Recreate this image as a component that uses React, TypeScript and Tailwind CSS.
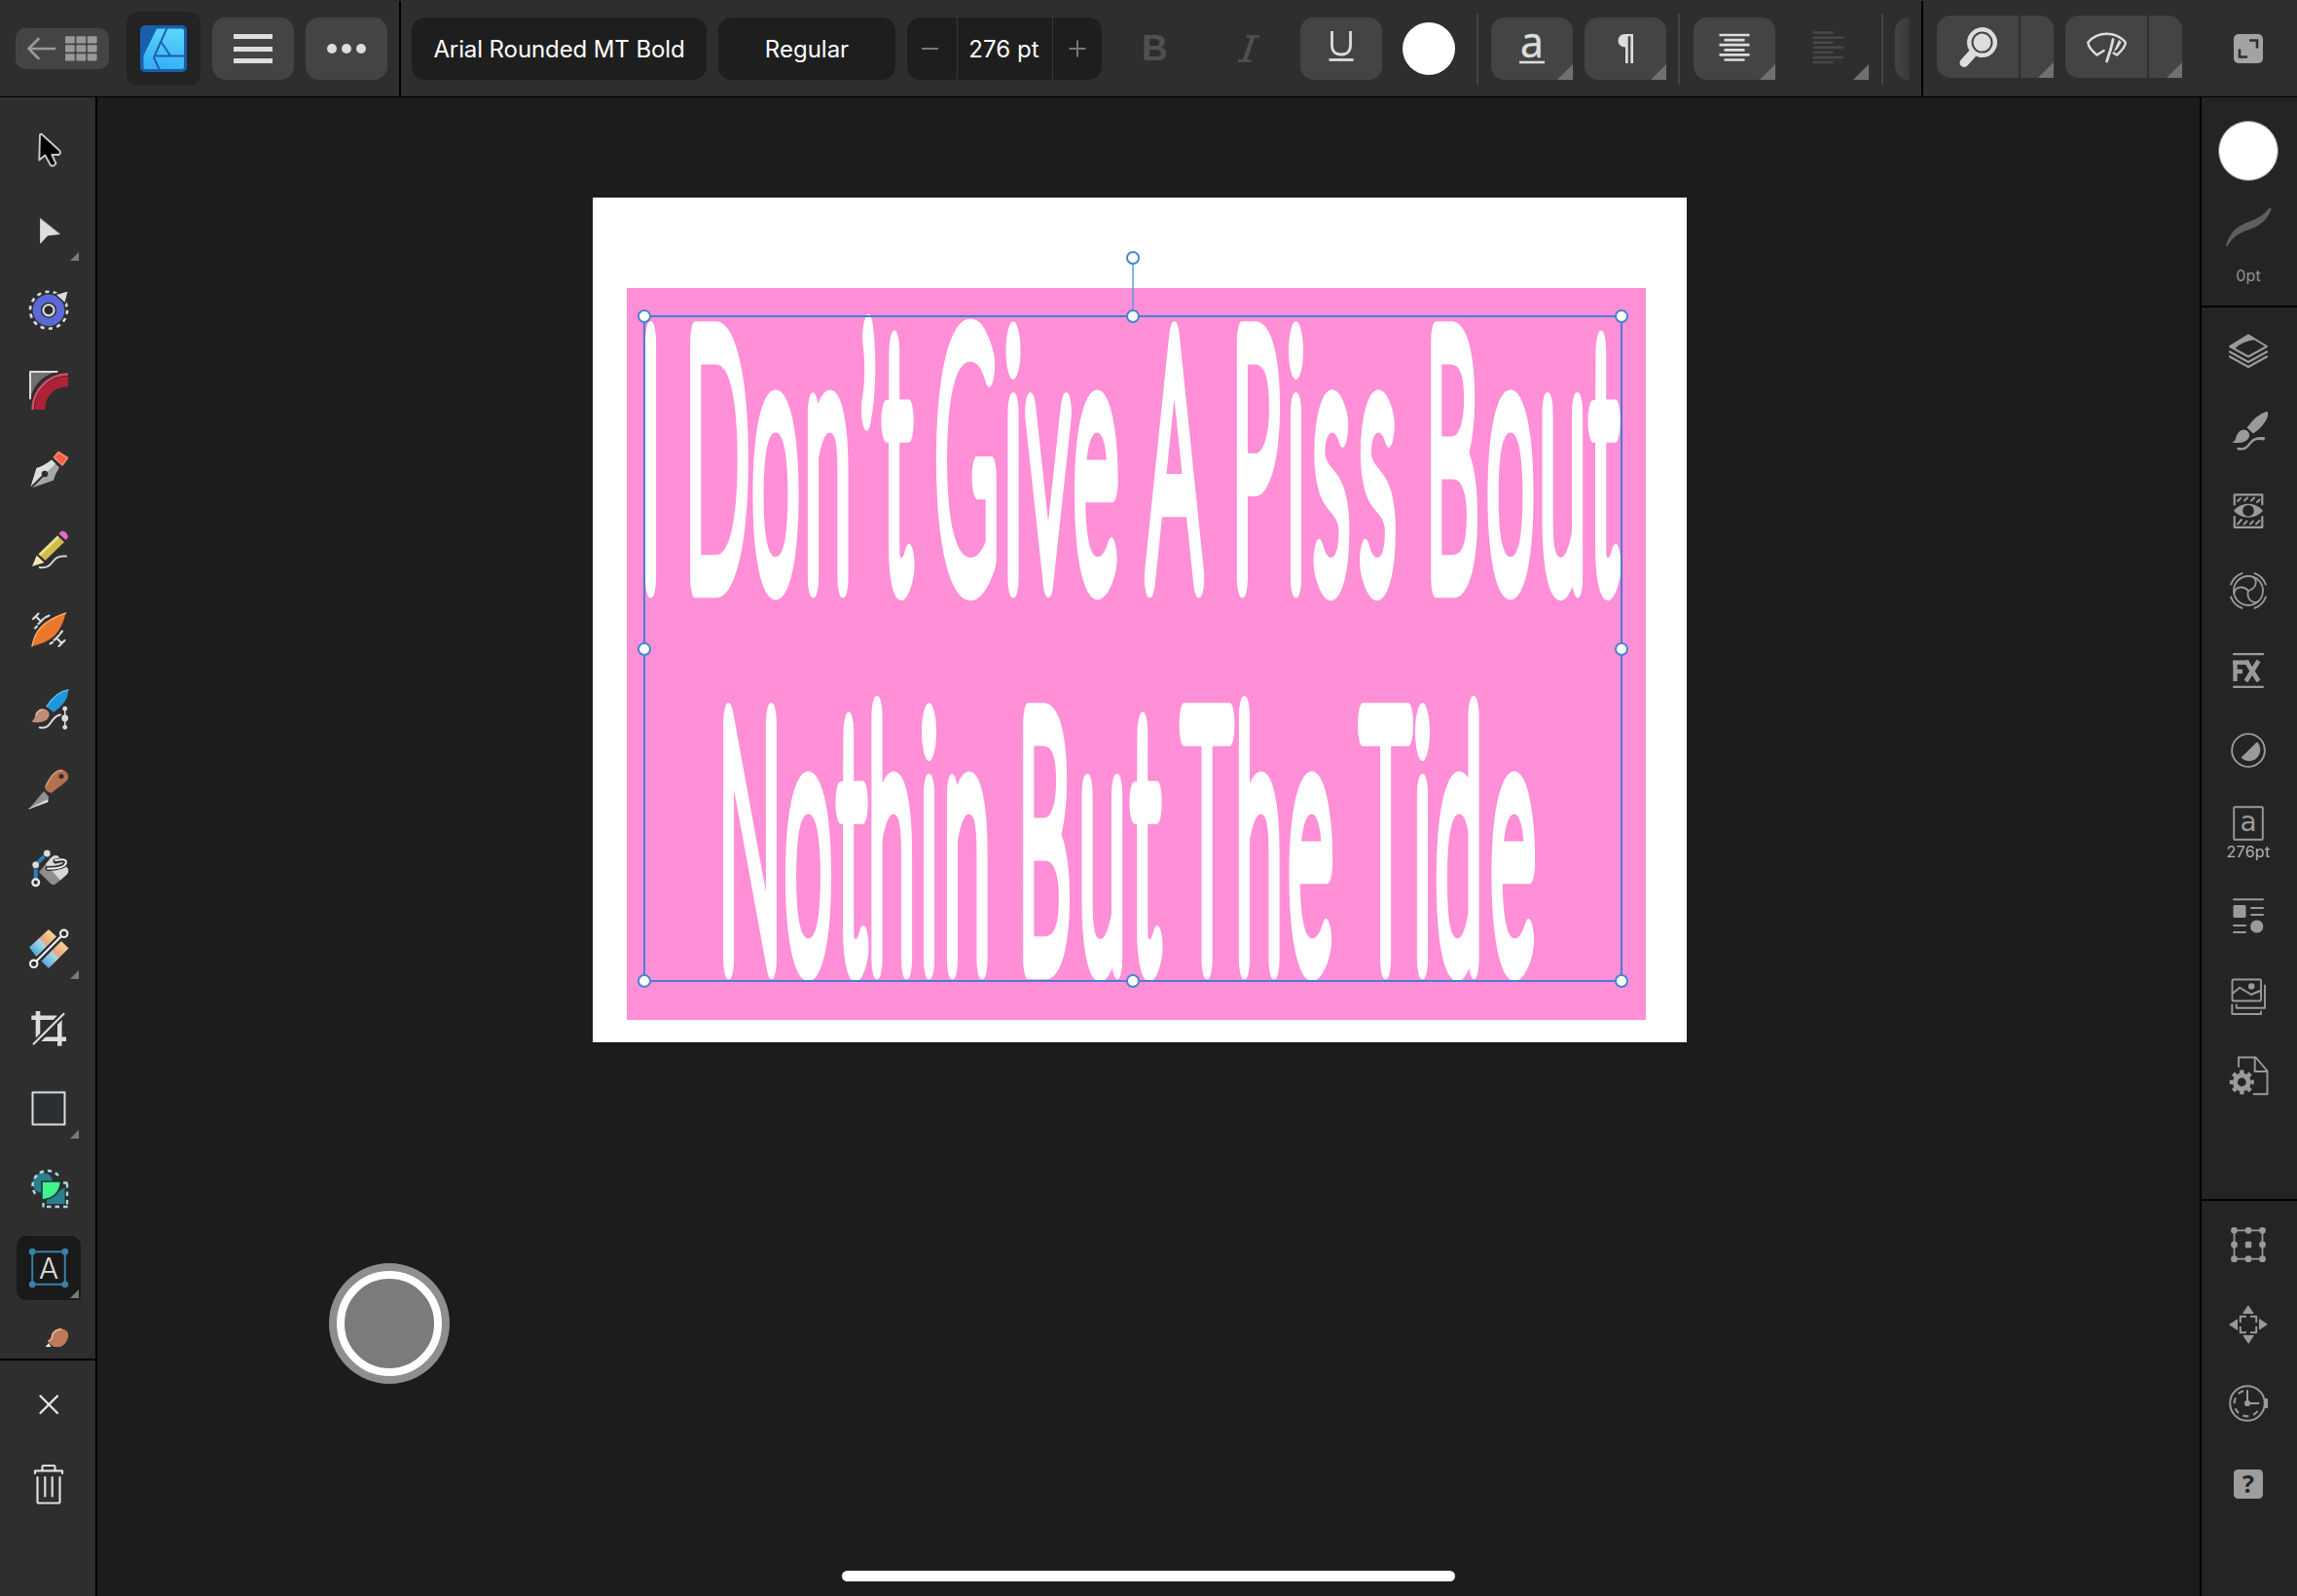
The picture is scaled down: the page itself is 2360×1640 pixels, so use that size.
import React from "react";

type Kids = { children?: React.ReactNode };

function Icon({ children, className = "" }: Kids & { className?: string }) {
  return (
    <svg viewBox="0 0 48 48" className={"h-12 w-12 shrink-0 overflow-visible " + className} fill="none" strokeLinecap="round" strokeLinejoin="round">
      {children}
    </svg>
  );
}

/* ---------- artwork text ---------- */

const SX = 0.92;
const SY = 3.7;

const LINE_ONE = {
  text: "I Don’t Give A Piss Bout",
  centers: [668.5, 690, 737, 797, 850.5, 892, 922, 950, 993, 1041, 1077, 1126, 1160, 1206.5, 1250, 1290, 1331.5, 1368, 1415.5, 1450, 1492, 1552, 1605.5, 1648],
};
const LINE_TWO = {
  text: "Nothin But The Tide",
  centers: [770.5, 830.5, 875, 916, 954.5, 993.5, 1030, 1073, 1132.5, 1177, 1200, 1240, 1293.5, 1346.5, 1380, 1423.5, 1461.5, 1499, 1554.5],
};

function StretchedLine({ line, baseline }: { line: { text: string; centers: number[] }; baseline: number }) {
  return (
    <>
      <text
        transform={`translate(-609 ${baseline - 203}) scale(${SX} ${SY})`}
        x={line.centers.map((c) => (c / SX).toFixed(2)).join(" ")}
        y={[...line.text].map((ch) => (ch === "’" ? 2.5 : 0)).join(" ")}
        textAnchor="middle"
        className="fill-white stroke-white font-['Lato'] text-[94px] font-thin"
        strokeWidth="11"
        strokeLinejoin="round"
        strokeLinecap="round"
      >
        {line.text}
      </text>
      {/* solid centres for the dots of the i */}
      {[...line.text].map((ch, i) =>
        ch === "i" ? <ellipse key={i} cx={line.centers[i] - 609} cy={baseline - 436} rx="5" ry="17" fill="#fff" /> : null
      )}
    </>
  );
}

const HANDLES = [
  [555, 62],
  [53, 122],
  [555, 122],
  [1057, 122],
  [53, 464],
  [1057, 464],
  [53, 805],
  [555, 805],
  [1057, 805],
];

function Artboard() {
  return (
    <div className="absolute left-[509px] top-[103px] h-[868px] w-[1124px] bg-white">
      <div className="absolute left-[35px] top-[93px] h-[752px] w-[1047px] bg-[#ff8fd6]" />
      <svg className="absolute inset-0 h-full w-full" viewBox="0 0 1124 868">
        <StretchedLine line={LINE_ONE} baseline={594} />
        <StretchedLine line={LINE_TWO} baseline={986} />
        <path d="M555 62V122" stroke="#5b9be6" strokeWidth="1.5" />
        <rect x="53" y="122" width="1004" height="683" fill="none" stroke="#4a7dd6" strokeWidth="2" />
        {HANDLES.map(([x, y]) => (
          <circle key={`${x}-${y}`} cx={x} cy={y} r="6" fill="#fff" stroke="#4585cc" strokeWidth="2" />
        ))}
      </svg>
    </div>
  );
}

/* ---------- top bar ---------- */

function Corner({ className = "" }: { className?: string }) {
  return (
    <svg viewBox="0 0 16 16" className={"absolute bottom-0 right-0 h-4 w-4 " + className}>
      <path d="M16 0V16H0Z" fill="#707070" />
    </svg>
  );
}

function Divider() {
  return <div className="h-[73px] w-[2px] shrink-0 bg-[#444]" />;
}

function TopBar() {
  return (
    <header className="flex h-[100px] shrink-0 items-center border-b border-black bg-[#2e2e2e] pt-px">
      <div className="flex h-[98px] w-[412px] shrink-0 items-center border-r-2 border-black pl-4">
        <div className="flex h-[42px] w-24 items-center rounded-[10px] bg-[#444]">
          <svg viewBox="0 0 96 42" className="h-[42px] w-24" fill="none">
            <path d="M40 21H14M23.500 11L13.500 21L23.500 31" stroke="#999" strokeWidth="2.600" strokeLinecap="round" strokeLinejoin="round" />
            {[0, 1, 2].map((r) =>
              [0, 1, 2].map((c) => <rect key={`${r}${c}`} x={51 + c * 11.400} y={8.200 + r * 9} width="9.800" height="7.300" rx="1" fill="#999" />)
            )}
          </svg>
        </div>
        <div className="ml-[18px] flex h-[76px] w-[76px] items-center justify-center rounded-[12px] bg-[#232323]">
          <svg viewBox="0 0 48 48" className="h-12 w-12">
            <defs>
              <linearGradient id="logoFill" x1="0.600" y1="0" x2="0.400" y2="1">
                <stop offset="0" stopColor="#5cd5fb" />
                <stop offset="1" stopColor="#34aef5" />
              </linearGradient>
            </defs>
            <rect width="48" height="48" rx="5" fill="#1a5fae" />
            <path d="M17 3.500H42.500Q45 3.500 45 6V42.500Q45 45 42.500 45H5.500Q3.500 45 3.500 42.500V31Z" fill="url(#logoFill)" />
            <path d="M27.500 3L14 33L19.500 45M21.500 17L31 31.300M14.500 31.500H45" stroke="#1a5fae" strokeWidth="1.900" fill="none" />
          </svg>
        </div>
        <div className="ml-3 flex h-16 w-[84px] flex-col items-center justify-center gap-[7.5px] rounded-[14px] bg-[#444]">
          <div className="h-[5px] w-10 bg-[#ddd]" />
          <div className="h-[5px] w-10 bg-[#ddd]" />
          <div className="h-[5px] w-10 bg-[#ddd]" />
        </div>
        <div className="ml-3 flex h-16 w-[84px] items-center justify-center gap-[5px] rounded-[14px] bg-[#444]">
          <div className="h-[10px] w-[10px] rounded-full bg-[#ddd]" />
          <div className="h-[10px] w-[10px] rounded-full bg-[#ddd]" />
          <div className="h-[10px] w-[10px] rounded-full bg-[#ddd]" />
        </div>
      </div>

      <div className="flex h-[98px] w-[1564px] shrink-0 items-center border-r-2 border-black pl-[11px] text-[24px] text-white">
        <div className="flex h-16 w-[303px] shrink-0 items-center justify-center rounded-[14px] bg-[#1e1e1e] pt-px">
          <span className="whitespace-nowrap tracking-[-0.1px]">Arial Rounded MT Bold</span>
        </div>
        <div className="ml-3 flex h-16 w-[182px] shrink-0 items-center justify-center rounded-[14px] bg-[#1e1e1e] pt-px">Regular</div>
        <div className="ml-3 flex h-16 w-[200px] shrink-0 items-center rounded-[14px] bg-[#1e1e1e]">
          <div className="flex h-16 w-[51px] items-center justify-center pr-px">
            <div className="-ml-1 h-[2px] w-[17px] bg-[#777]" />
          </div>
          <div className="flex h-16 w-[99px] items-center justify-center whitespace-nowrap border-x border-[#383838] pr-[2px] pt-px tracking-[0.1px]">276 pt</div>
          <div className="flex h-16 flex-1 items-center justify-center">
            <svg viewBox="0 0 18 18" className="h-[18px] w-[18px]">
              <path d="M9 0.500V17.500M0.500 9H17.500" stroke="#777" strokeWidth="2" />
            </svg>
          </div>
        </div>
        <span className="ml-[41px] w-[26px] text-center font-['Liberation_Sans'] text-[37px] font-bold leading-[40px] text-[#505050]">B</span>
        <svg viewBox="0 0 22 28" className="ml-[73px] h-7 w-[22px] shrink-0" fill="none" stroke="#505050">
          <path d="M8.500 1.500H22M0 26.500H13.500" strokeWidth="2.500" />
          <path d="M15.300 1.500L6.700 26.500" strokeWidth="4" />
        </svg>
        <div className="ml-[42px] flex h-16 w-[84px] shrink-0 items-center justify-center rounded-[14px] bg-[#444]">
          <svg viewBox="0 0 26 32" className="mb-[4px] h-8 w-[26px]" fill="none" stroke="#ddd">
            <path d="M3.500 0V14.500C3.500 20.500 7 24 13 24S22.500 20.500 22.500 14.500V0" strokeWidth="2.800" />
            <path d="M0.500 29.500H25.500" strokeWidth="2.800" />
          </svg>
        </div>
        <div className="ml-[21px] h-[54px] w-[54px] shrink-0 rounded-full bg-white" />
        <div className="ml-[22px] flex items-center">
          <Divider />
          <div className="relative ml-[13px] flex h-16 w-[84px] items-center justify-center rounded-[14px] rounded-br-none bg-[#444]">
            <svg viewBox="0 0 84 64" className="h-16 w-[84px] overflow-visible">
              <text x="42" y="41" textAnchor="middle" className="fill-[#ddd] stroke-[#ddd] font-['Open_Sans'] text-[43px]" strokeWidth="0.500">
                a
              </text>
              <path d="M29 46H55" stroke="#ddd" strokeWidth="2.600" />
            </svg>
            <Corner />
          </div>
          <div className="relative ml-3 flex h-16 w-[84px] items-center justify-center rounded-[14px] rounded-br-none bg-[#444]">
            <svg viewBox="0 0 17 30" className="h-[30px] w-[17px]">
              <path d="M7.500 0H16V30H13.300V2.300H10.700V30H8V13.500C3.500 13.500 0.500 10.600 0.500 6.800S3.500 0 7.500 0Z" fill="#ddd" />
            </svg>
            <Corner />
          </div>
          <div className="ml-3">
            <Divider />
          </div>
          <div className="relative ml-[14px] flex h-16 w-[84px] items-center justify-center rounded-[14px] rounded-br-none bg-[#444]">
            <svg viewBox="0 0 32 30" className="mb-[2px] h-[30px] w-8" stroke="#ddd" strokeWidth="2.700">
              <path d="M0.500 2H31.500M5.500 7.100H26.500M0.500 12.200H31.500M5.500 17.300H26.500M0.500 22.400H31.500M5.500 27.500H26.500" />
            </svg>
            <Corner />
          </div>
          <div className="relative ml-3 h-16 w-[84px]">
            <svg viewBox="0 0 84 64" className="h-16 w-[84px]" stroke="#494949" strokeWidth="2.400">
              <path d="M26.500 15.500H47.500M26.500 20.600H58M26.500 25.700H47.500M26.500 30.800H58M26.500 35.900H47.500M26.500 41H58M26.500 46H47.500" />
            </svg>
            <Corner />
          </div>
          <div className="ml-[13px]">
            <Divider />
          </div>
          <div className="ml-[12px] h-16 w-[15px] rounded-l-[14px] bg-gradient-to-r from-[#444] to-[#383838]" />
        </div>
      </div>

      <div className="flex h-[98px] flex-1 items-start pl-[14px] pt-[15px]">
        <div className="relative flex h-16 w-[120px] overflow-hidden rounded-[14px] rounded-br-none bg-[#444]">
          <div className="h-16 w-[86px] border-r-2 border-[#2e2e2e]">
            <svg viewBox="0 0 84 64" className="h-16 w-[84px]" fill="none">
              <path d="M37.500 38L28 48.500" stroke="#ddd" strokeWidth="9" strokeLinecap="round" />
              <path d="M34.500 36L40 41" stroke="#444" strokeWidth="1.500" />
              <circle cx="46.500" cy="27.600" r="15.500" fill="#ddd" />
              <circle cx="46.500" cy="27.600" r="10" stroke="#444" strokeWidth="2" />
            </svg>
          </div>
          <Corner />
        </div>
        <div className="relative ml-3 flex h-16 w-[120px] overflow-hidden rounded-[14px] rounded-br-none bg-[#444]">
          <div className="h-16 w-[86px] border-r-2 border-[#2e2e2e]">
            <svg viewBox="0 0 84 64" className="h-16 w-[84px]" fill="none" stroke="#ddd" strokeWidth="2.400" strokeLinejoin="round" strokeLinecap="round">
              <path d="M39.500 36L32.500 40.500C27 36 23.300 31.500 23.300 27.500C29 21 35 18.800 42.500 18.800S56 21 61.800 27.500C61.800 31.500 58 36 53 40.500L49.500 38.500" />
              <path d="M49 24.500L46.500 35L42.500 47" strokeWidth="2.800" />
              <path d="M55 26L50.500 36.500L53.500 33.500L57 27.500Z" fill="#ddd" strokeWidth="1" />
            </svg>
          </div>
          <Corner />
        </div>
        <svg viewBox="0 0 30 30" className="ml-[53px] mt-[19px] h-[30px] w-[30px]">
          <rect width="30" height="30" rx="5" fill="#a3a3a3" />
          <path d="M16 6.500H24V14.500M14 23.500H6V15.500" stroke="#2e2e2e" strokeWidth="2.600" fill="none" />
        </svg>
      </div>
    </header>
  );
}

/* ---------- left tools ---------- */

const O = "#2e2e2e";

const TOOLS: { name: string; more?: boolean; active?: boolean; art: React.ReactNode }[] = [
  {
    name: "move",
    art: <path d="M15 7.500L14.300 33.500L20.300 28.500L25.800 38.500Q29 41 31.500 37L27.300 28H34.500Q37 26 35 23.500L17.500 7.500Q16 6 15 7.500Z" fill="#000" stroke="#c9c9c9" strokeWidth="1.900" />,
  },
  { name: "node", more: true, art: <path d="M15.500 12V37L23 28.800L35 27.500Z" fill="#ddd" stroke="#ddd" strokeWidth="0.800" /> },
  {
    name: "contour",
    art: (
      <>
        <circle cx="24" cy="23.700" r="19" stroke="#ddd" strokeWidth="2.600" strokeDasharray="4.200 4.325" strokeLinecap="butt" />
        <circle cx="24" cy="23.700" r="16.300" fill="#5a69d6" />
        <circle cx="24" cy="23.700" r="8" fill="#1e2038" />
        <circle cx="24" cy="23.700" r="5.600" stroke="#ddd6c6" strokeWidth="2.300" fill="#2a2a34" />
        <path d="M44.500 3.500L30.500 7.500L41 17Z" fill="#ddd" stroke={O} strokeWidth="1.500" />
      </>
    ),
  },
  {
    name: "corner",
    art: (
      <>
        <path d="M5 32V5H32C18 9 9 18 5 32Z" fill="#707070" />
        <path d="M5 32.500V5H32.500" stroke="#ddd" strokeWidth="2" />
        <path d="M8 44C8 24 24 8 44 8" stroke={O} strokeWidth="7" strokeLinecap="butt" />
        <path d="M7.500 44C7.500 24 24 7.500 44 7.500" stroke="#d84a60" strokeWidth="2.600" strokeLinecap="butt" />
        <path d="M15 44C15 27 27 15 44 15" stroke="#ad2238" strokeWidth="10.500" strokeLinecap="butt" />
      </>
    ),
  },
  {
    name: "pen",
    art: (
      <>
        <path d="M5 43L11.500 22Q19 20 27 13.500L35 21.500Q31 27 29 34.500Z" fill="#a6a6a6" />
        <path d="M5 43L11.500 22Q19 20 27 13.500L31 17.500Z" fill="#dedede" />
        <path d="M5.500 42.500L20 28" stroke={O} strokeWidth="2" />
        <circle cx="20" cy="28" r="3.300" fill={O} />
        <path d="M34 5.500L43.500 11.500L38 19L29.500 11Z" fill="#f4604a" stroke="#ff8a6c" strokeWidth="1.500" />
      </>
    ),
  },
  {
    name: "pencil",
    art: (
      <>
        <path d="M13.500 28.500L33 9.500L40 16L20.500 35Z" fill="#d3bb4e" />
        <path d="M13.500 28.500L33 9.500L35 11.500L15.500 30.500Z" fill="#ecdf8a" />
        <path d="M7 41L11.800 29.500L19.500 37Z" fill="#f3e5ae" />
        <path d="M12.300 28.800L20.500 36.500" stroke={O} strokeWidth="1.800" />
        <path d="M34.500 7.500L37 4.800Q42.500 4.500 44 10.500L41.800 14Z" fill="#e36ccb" />
        <path d="M14.700 42C31 44 25 29 42 30.500" stroke="#ccd4dc" strokeWidth="2" />
      </>
    ),
  },
  {
    name: "width",
    art: (
      <>
        <path d="M7 41C10 26 16 16 41.500 7C37 25 30 36 7 41Z" fill="#e9772d" />
        <path d="M7 41C10 26 16 16 41.500 7" stroke="#ffa765" strokeWidth="1.500" />
        <path d="M8 13L13.500 7.500M11 10.500L16 15.500M13.500 18L19 12.500M20.500 11.500L24.500 9.500M10 22.500L12 20.500" stroke="#ddd" strokeWidth="2.100" />
        <path d="M34.500 41L40.500 35M37.500 38L32 32.500M29.500 35L35 29.500M36 28L38 25.500M25.500 38.500L28 37" stroke="#ddd" strokeWidth="2.100" />
      </>
    ),
  },
  {
    name: "vector-brush",
    art: (
      <>
        <path d="M22 21C29 10 36 5 44 4C44.500 12 39 20 29 27Z" fill="#2196dc" />
        <path d="M22 21C29 10 36 5 44 4" stroke="#5cbcf2" strokeWidth="1.400" />
        <path d="M6.300 36.500C11 34 9.500 26 16 24Q21 22 24 26.500Q26 31 21.500 35Q15 39 6.300 36.500Z" fill="#c08c78" />
        <path d="M11 30Q12 25 18 24" stroke="#e2bba8" strokeWidth="1.500" />
        <path d="M14.700 42.500C28 45 25 31 36 29.500" stroke="#ddd" strokeWidth="2" />
        <path d="M40.700 23V43" stroke="#ddd" strokeWidth="1.500" />
        <circle cx="40.700" cy="23.200" r="2.400" fill="#ddd" />
        <circle cx="40.700" cy="33" r="3.400" fill="#ddd" />
        <circle cx="40.700" cy="42.300" r="2.400" fill="#ddd" />
      </>
    ),
  },
  {
    name: "knife",
    art: (
      <>
        <path d="M20 23C27 8 32 4 38 4Q45 6 44 13C42 18 34 21 27 28Q22 27 20 23Z" fill="#b5714f" />
        <path d="M21 21C27 8 32 4 38 4.500" stroke="#d99a78" strokeWidth="1.600" />
        <circle cx="37" cy="10.700" r="2.500" fill={O} />
        <path d="M19 26L24 31.500L23 37L4 44Z" fill="#8f8f8f" />
        <path d="M4 44L23 37L23.200 34.800Z" fill="#e8e8e8" stroke="#e8e8e8" strokeWidth="0.500" />
      </>
    ),
  },
  {
    name: "fill",
    art: (
      <>
        <path d="M22.300 8L10.700 19.700V37" stroke="#2a80b8" strokeWidth="4" />
        <path d="M14 27L25 14Q30 8 34 11L44 24Q45 28 41 31L31 39.500Q28 41 26 39Z" fill="#8e8e8e" />
        <path d="M25 14Q30 8 34 11L44 24Q45 28 41 31L36 35.500L21 19Z" fill="#d8d8d8" />
        <path d="M23 23.500Q40 23 42 17.500Q43 13 31 16" stroke={O} strokeWidth="5" />
        <path d="M23 23.500Q40 24 42 17.500Q42.500 12.500 31 15" stroke="#eee" strokeWidth="2" />
        <circle cx="22.300" cy="8" r="4" fill="#ddd" stroke={O} strokeWidth="1" />
        <circle cx="10.700" cy="19.700" r="4" fill="#ddd" stroke={O} strokeWidth="1" />
        <circle cx="10.700" cy="37.700" r="3.300" fill={O} stroke="#eee" strokeWidth="2.400" />
      </>
    ),
  },
  {
    name: "gradient",
    more: true,
    art: (
      <>
        <defs>
          <linearGradient id="gA" gradientUnits="userSpaceOnUse" x1="8" y1="27" x2="28" y2="8">
            <stop offset="0" stopColor="#58a9d6" />
            <stop offset="0.450" stopColor="#a9d8e6" />
            <stop offset="0.550" stopColor="#e8a48a" />
            <stop offset="1" stopColor="#f3d68c" />
          </linearGradient>
          <linearGradient id="gB" gradientUnits="userSpaceOnUse" x1="20" y1="40" x2="41" y2="19">
            <stop offset="0" stopColor="#58a9d6" />
            <stop offset="0.450" stopColor="#a9d8e6" />
            <stop offset="0.550" stopColor="#e8a48a" />
            <stop offset="1" stopColor="#f3d68c" />
          </linearGradient>
        </defs>
        <path d="M5 22.500L24 5L31 11.500L11.500 31Z" fill="url(#gA)" stroke="url(#gA)" strokeWidth="1.500" />
        <path d="M17.500 36.500L37 17L43.500 23.500L24 43Z" fill="url(#gB)" stroke="url(#gB)" strokeWidth="1.500" />
        <path d="M8.700 39.300L39.700 8.300" stroke={O} strokeWidth="6" />
        <path d="M11 37L37 11" stroke="#eee" strokeWidth="2.200" />
        <circle cx="8.700" cy="39.300" r="3.700" fill={O} stroke="#eee" strokeWidth="2.200" />
        <circle cx="39.700" cy="8.300" r="3.700" fill={O} stroke="#eee" strokeWidth="2.200" />
      </>
    ),
  },
  {
    name: "crop",
    art: (
      <>
        <path d="M6.300 12.700H32.500M13 6V33M15.500 34.700H42M35.300 15V41.700" stroke="#ddd" strokeWidth="4.600" strokeLinecap="butt" />
        <path d="M6 43L41 7" stroke={O} strokeWidth="6.500" strokeLinecap="butt" />
        <path d="M8 40.300L40 8.300" stroke="#ddd" strokeWidth="2.200" strokeLinecap="butt" />
      </>
    ),
  },
  { name: "rectangle", more: true, art: <rect x="7.500" y="7.500" width="33" height="33" fill="#2a3031" stroke="#ddd" strokeWidth="2" /> },
  {
    name: "shape-builder",
    art: (
      <>
        <circle cx="18" cy="18.500" r="10.500" fill="#2b7f8b" />
        <path d="M40.500 23V40H22V36Z" fill="#2b7f8b" />
        <path d="M34 11A14.600 14.600 0 1 0 11.500 31.500" stroke="#a9dbe5" strokeWidth="2.500" strokeDasharray="4.200 4" strokeLinecap="butt" />
        <path d="M39 18.500H44M43 19V43.500M43.500 43H18.500M18.500 39V44" stroke="#a9dbe5" strokeWidth="2.300" strokeDasharray="4.500 4" strokeLinecap="butt" />
        <path d="M17 17H36.500Q35.500 34 17 36Z" fill="#41f28e" stroke="#1b3b36" strokeWidth="1.600" />
      </>
    ),
  },
  {
    name: "text",
    more: true,
    active: true,
    art: (
      <>
        <rect x="7.200" y="7.200" width="33.600" height="33.600" stroke="#3a80a8" strokeWidth="2" />
        {[7.200, 40.800].map((x) => [7.200, 40.800].map((y) => <circle key={`${x}${y}`} cx={x} cy={y} r="3.400" fill="#3a80a8" />))}
        <text x="24" y="34.800" textAnchor="middle" className="fill-[#ddd] font-['Inter'] text-[30px] font-light">
          A
        </text>
      </>
    ),
  },
  {
    name: "smudge",
    art: (
      <>
        <path d="M20 24L24 19L27 24Z" fill="#eee" />
        <path d="M23.300 17.500Q27 16 27 10Q31 3.500 38 4.500Q45 6 44 13Q42 22 33 24Q27 23 23.300 17.500Z" fill="#bd7a5a" />
        <path d="M24 17Q28 15 28 10Q31 5 37 5" stroke="#e8b899" strokeWidth="1.600" />
      </>
    ),
  },
];

function LeftRail() {
  return (
    <aside className="flex w-[100px] shrink-0 flex-col border-r-2 border-black bg-[#2e2e2e]">
      <div className="h-[1284px] shrink-0 overflow-hidden pt-[14px]">
        {TOOLS.map((t) => (
          <div key={t.name} className="flex h-[82px] items-center justify-center pl-[2px]">
            <div className={"relative flex h-[66px] w-[66px] items-center justify-center " + (t.active ? "rounded-[10px] rounded-br-[4px] bg-[#1a1a1a]" : "")}>
              <Icon>{t.art}</Icon>
              {t.more && (
                <svg viewBox="0 0 9 9" className="absolute bottom-[2px] right-[2px] h-[9px] w-[9px]">
                  <path d="M9 0V9H0Z" fill="#7a7a7a" />
                </svg>
              )}
            </div>
          </div>
        ))}
      </div>
      <div className="mt-3 h-[2px] shrink-0 bg-black" />
      <div className="flex flex-col pl-[2px] pt-1">
        <div className="flex h-[82px] items-center justify-center">
          <Icon>
            <path d="M15.500 15.500L33 33M33 15.500L15.500 33" stroke="#e6e6e6" strokeWidth="2.300" />
          </Icon>
        </div>
        <div className="flex h-[82px] items-center justify-center">
          <Icon>
            <path d="M10 13V10.300H38V13M17.500 9.500V6Q17.500 5 18.500 5H29.500Q30.500 5 30.500 6V9.500M12.500 17V42Q12.500 43.500 14 43.500H34Q35.500 43.500 35.500 42V17M20.300 17V36.500M27.700 17V36.500" stroke="#ddd" strokeWidth="2.200" />
          </Icon>
        </div>
      </div>
    </aside>
  );
}

/* ---------- right studio ---------- */

const G = "#9a9a9a";
const GEAR_TEETH = [0, 45, 90, 135, 180, 225, 270, 315];

const PANELS: { name: string; art: React.ReactNode }[] = [
  {
    name: "layers",
    art: (
      <>
        <path d="M24 7.300L43 19L24 29.500L5 19Z" stroke={G} strokeWidth="2" />
        <path d="M24 7L32 12Q18 13 10 21.500L5 19Z" fill={G} />
        <path d="M5 24.500L24 35L43 24.500M5 29.500L24 40L43 29.500" stroke={G} strokeWidth="2.200" />
      </>
    ),
  },
  {
    name: "brushes",
    art: (
      <>
        <path d="M22.500 20.500Q32 7 43 3.700Q45 5 43.500 10Q40 19 29 26.500Z" fill={G} />
        <path d="M7 35.500Q11 34.500 11.500 29.500Q14 22.500 20 22.500Q26 24 25 30Q21 38 7 35.500Z" fill={G} />
        <path d="M13.500 42C28 45 22 29 40 31.500" stroke={G} strokeWidth="2.400" />
        <path d="M28 34Q33 29.500 41 30.500L40 33.500Q33 32.500 28 34Z" fill={G} />
      </>
    ),
  },
  {
    name: "appearance",
    art: (
      <>
        <path d="M9.700 17.500V7.300H38.300V17.500M9.700 30V40.800H38.300V30" stroke={G} strokeWidth="2.200" />
        <path d="M13 14L16 11M20 13.500L23 10.500M27 13.500L30 10.500M33 15L35.500 12.500M13 37.500L17 33M19.500 37.500L22.500 34.500M26 37.500L29 34.500M32 37.500L35.500 34" stroke={G} strokeWidth="2" />
        <path d="M9 23.700C17 14.500 31 14.500 39 23.700C31 33 17 33 9 23.700Z" fill={G} />
        <circle cx="24" cy="23.700" r="5.800" fill="#242424" />
      </>
    ),
  },
  {
    name: "adjust-swirl",
    art: (
      <>
        <circle cx="24" cy="24" r="15" stroke={G} strokeWidth="1.800" />
        {[0, 120, 240].map((a) => (
          <path key={a} transform={`rotate(${a} 24 24)`} d="M24 24C32 22 34 14 29 10" stroke={G} strokeWidth="1.800" />
        ))}
        {[0, 90, 180, 270].map((a) => (
          <path key={a} transform={`rotate(${a} 24 24)`} d="M30.500 6.100A19 19 0 0 1 41.900 17.500" stroke={G} strokeWidth="1.900" />
        ))}
      </>
    ),
  },
  {
    name: "fx",
    art: (
      <>
        <path d="M9 7.200H39M9 40.800H39" stroke={G} strokeWidth="2.200" />
        <path d="M8 15.800H24.500M10.500 15.800V35M10.500 25H18" stroke={G} strokeWidth="4.400" strokeLinecap="butt" strokeLinejoin="miter" />
        <path d="M21.500 14L34.500 35M34.500 14L21.500 35" stroke={G} strokeWidth="4.600" strokeLinecap="butt" />
      </>
    ),
  },
  {
    name: "adjustment",
    art: (
      <>
        <circle cx="24" cy="24" r="16.900" stroke={G} strokeWidth="1.900" />
        <path d="M33 15.300A11 11 0 0 1 16.500 31.500Z" fill={G} />
      </>
    ),
  },
];

const PANELS_LOWER: { name: string; art: React.ReactNode }[] = [
  {
    name: "paragraph",
    art: (
      <>
        <path d="M9 7.200H39M27 16H39M27 23H39M9 34H21M9 41H21" stroke={G} strokeWidth="2" />
        <rect x="8.500" y="13" width="13" height="13" rx="1.500" fill={G} />
        <circle cx="32.700" cy="35" r="6.600" fill={G} />
      </>
    ),
  },
  {
    name: "stock",
    art: (
      <>
        <rect x="7.500" y="7.500" width="29.500" height="22" rx="1" stroke={G} strokeWidth="1.900" />
        <path d="M8.500 21.500L15 15.800L27 23L36.500 19" stroke={G} strokeWidth="1.900" />
        <circle cx="27.200" cy="14.500" r="3.200" fill={G} />
        <path d="M11.700 33.500V36.700H41V13.500M7.300 33.500V43H37V40.500" stroke={G} strokeWidth="1.900" />
      </>
    ),
  },
  {
    name: "document-setup",
    art: (
      <>
        <path d="M14 15V5.500H31.500L43.500 19.500V43.300H29.500M30.700 6V20H43" stroke={G} strokeWidth="1.900" strokeLinejoin="miter" />
        <circle cx="17.300" cy="31" r="6.900" stroke={G} strokeWidth="5" />
        {GEAR_TEETH.map((a) => (
          <path key={a} transform={`rotate(${a} 17.300 31)`} d="M17.300 22V18.500" stroke={G} strokeWidth="4.400" strokeLinecap="butt" />
        ))}
      </>
    ),
  },
];

const PANELS_BOTTOM: { name: string; art: React.ReactNode }[] = [
  {
    name: "transform",
    art: (
      <>
        <rect x="9.500" y="9.300" width="29" height="29.400" stroke={G} strokeWidth="1.800" />
        {[
          [9.500, 9.300],
          [24, 9.300],
          [38.500, 9.300],
          [9.500, 24],
          [38.500, 24],
          [9.500, 38.700],
          [24, 38.700],
          [38.500, 38.700],
        ].map(([x, y]) => (
          <circle key={`${x}-${y}`} cx={x} cy={y} r="3.400" fill={G} />
        ))}
        <rect x="20.800" y="20.800" width="6.400" height="6.400" rx="1" fill={G} />
      </>
    ),
  },
  {
    name: "navigator",
    art: (
      <>
        {[0, 90, 180, 270].map((a) => (
          <g key={a} transform={`rotate(${a} 24 24)`}>
            <path d="M24 5L29 12.500H19Z" fill={G} stroke={G} strokeWidth="1" />
            <path d="M15.800 22V15.800H22" stroke={G} strokeWidth="2" strokeLinecap="butt" />
          </g>
        ))}
      </>
    ),
  },
  {
    name: "history",
    art: (
      <>
        <circle cx="23" cy="23" r="17.800" stroke={G} strokeWidth="2" />
        <path d="M23 10V23H34.500" stroke={G} strokeWidth="2" />
        <circle cx="23" cy="23" r="3.100" fill={G} />
        <path d="M19 10.300A13.300 13.300 0 1 0 33.500 31" stroke={G} strokeWidth="2" strokeDasharray="6 5" strokeLinecap="butt" />
        <path d="M42.300 19.500V26.500" stroke={G} strokeWidth="3.600" />
      </>
    ),
  },
  {
    name: "help",
    art: (
      <>
        <rect x="9" y="9" width="30" height="30" rx="4.500" fill="#9d9d9d" />
        <text x="24" y="33" textAnchor="middle" className="fill-[#242424] font-['Open_Sans'] text-[25px] font-bold">
          ?
        </text>
      </>
    ),
  },
];

function PanelCells({ items }: { items: { name: string; art: React.ReactNode }[] }) {
  return (
    <>
      {items.map((p) => (
        <div key={p.name} className="flex h-[82px] shrink-0 items-center justify-center">
          <Icon>{p.art}</Icon>
        </div>
      ))}
    </>
  );
}

function RightRail() {
  return (
    <aside className="flex w-[100px] shrink-0 flex-col border-l-2 border-black bg-[#242424] text-[#a0a0a0]">
      <div className="flex h-[214px] shrink-0 flex-col items-center pr-[2px] pt-[24px]">
        <div className="h-[62px] w-[62px] rounded-full border border-[#777] bg-white" />
        <Icon className="mt-[23px]">
          <path d="M1 43.500C6 26 16 22 27 18C37 14 42 9 45.500 4.500Q48 4 47.500 7C43 17 36 23 26 26.500C14 30 8 35 3 43Q1.500 45 1 43.500Z" fill="#5e5e5e" />
        </Icon>
        <span className="mt-4 text-[16px] leading-5 tracking-[0.2px] text-[#949494]">0pt</span>
      </div>
      <div className="h-[2px] shrink-0 bg-black" />
      <div className="flex h-[916px] shrink-0 flex-col pr-[2px] pt-1">
        <PanelCells items={PANELS} />
        <div className="flex h-[88px] shrink-0 flex-col items-center pt-4">
          <svg viewBox="0 0 32 36" className="h-9 w-8 overflow-visible">
            <rect x="1.200" y="1.200" width="29.600" height="33.600" rx="1" fill="none" stroke={G} strokeWidth="1.900" />
            <text x="16" y="26" textAnchor="middle" className="fill-[#9a9a9a] font-['DejaVu_Sans'] text-[28px]">
              a
            </text>
          </svg>
          <span className="mt-px text-[16px] leading-5 tracking-[0.3px] text-[#b4b4b4]">276pt</span>
        </div>
        <PanelCells items={PANELS_LOWER} />
      </div>
      <div className="h-[2px] shrink-0 bg-black" />
      <div className="flex flex-col pr-[2px] pt-1">
        <PanelCells items={PANELS_BOTTOM} />
      </div>
    </aside>
  );
}

export default function App() {
  return (
    <div className="flex h-[1640px] w-[2360px] flex-col overflow-hidden bg-[#1c1c1c] font-['Inter',sans-serif]">
      <TopBar />
      <div className="flex min-h-0 flex-1">
        <LeftRail />
        <main className="relative flex-1 overflow-hidden bg-[#1c1c1c]">
          <Artboard />
          <div className="absolute left-[238px] top-[1198px] flex h-[124px] w-[124px] items-center justify-center rounded-full bg-[#8e8e8e]">
            <div className="h-[108px] w-[108px] rounded-full border-8 border-white bg-[#7b7b7b]" />
          </div>
          <div className="absolute left-[765px] top-[1514px] h-[11px] w-[630px] rounded-full bg-white" />
        </main>
        <RightRail />
      </div>
    </div>
  );
}
